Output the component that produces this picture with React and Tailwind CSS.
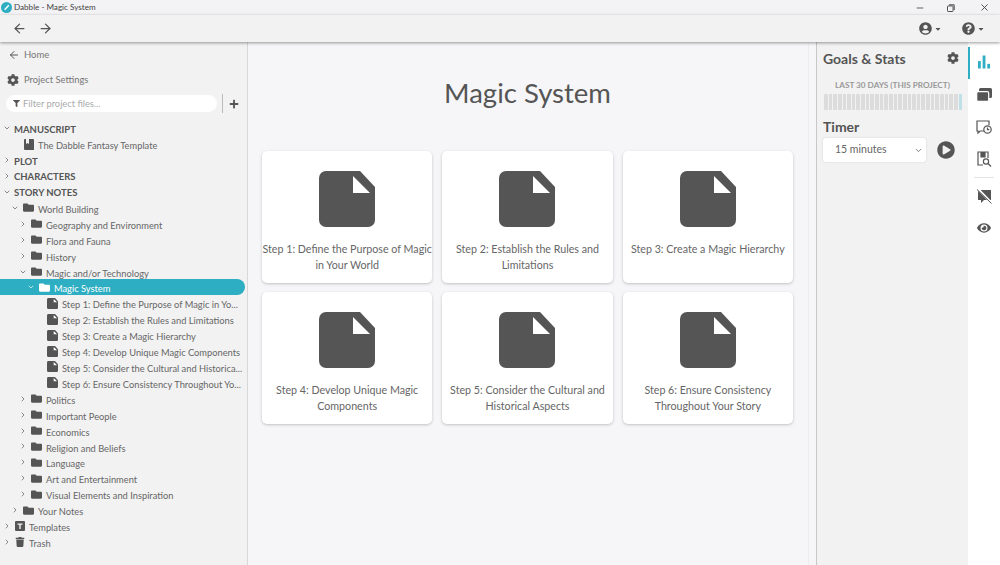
import React from "react";
import { ArrowLeft, ArrowRight, ChevronDown, ChevronRight, Minus, X } from "lucide-react";
import { FaCog, FaFilter, FaPlus, FaFolder, FaTrash, FaUserCircle, FaQuestionCircle, FaPlayCircle, FaEye, FaCaretDown } from "react-icons/fa";

const font = "font-['Lato','Open_Sans',sans-serif]";

const FileIcon = ({ className }) => (
  <svg viewBox="0 0 56 56" className={className}>
    <path d="M7 0H41L56 16V49a7 7 0 0 1-7 7H7a7 7 0 0 1-7-7V7a7 7 0 0 1 7-7Z" fill="#555" />
    <path d="M34 5L51 22H34Z" fill="#fff" />
  </svg>
);

const BookIcon = () => (
  <svg viewBox="0 0 10 11" className="w-[10px] h-[11px] shrink-0 ml-[1px]">
    <path d="M0 1a1 1 0 0 1 1-1h1v5l1.5-1L5 5V0h4a1 1 0 0 1 1 1v10H1a1 1 0 0 1-1-1Z" fill="#555" />
  </svg>
);

const TemplateIcon = () => (
  <svg viewBox="0 0 10 10" className="w-[10px] h-[10px] shrink-0">
    <rect width="10" height="10" rx="1" fill="#555" />
    <path d="M2.5 2.5h5v1.3H5.7V8H4.3V3.8H2.5Z" fill="#f2f2f2" />
  </svg>
);

const indent = ["pl-[3px]", "pl-[11px]", "pl-[19px]", "pl-[27px]", "pl-[35px]"];

const Row = ({ depth = 0, open, leaf, icon, active, bold, label }) => (
  <div
    className={`flex items-center h-[15.92px] ${indent[depth]} ${
      active ? "bg-[#2eaec2] text-white rounded-r-full w-[245px]" : "text-[#666]"
    }`}
  >
    <span className="w-2 shrink-0 flex items-center justify-center mr-[4px]">
      {!leaf &&
        (open ? (
          <ChevronDown size={10} strokeWidth={2} className={active ? "text-white" : "text-[#555]"} />
        ) : (
          <ChevronRight size={10} strokeWidth={2} className="text-[#555]" />
        ))}
    </span>
    {icon}
    <span
      className={`whitespace-nowrap ${
        bold ? "font-bold text-[9.5px] text-[#555] -ml-[1px] pt-[3px]" : "text-[9.3px] ml-[4px] pt-[4px]"
      }`}
    >
      {label}
    </span>
  </div>
);

const Folder = ({ white }) => (
  <FaFolder className={`w-[11px] h-[11px] shrink-0 ${white ? "text-white" : "text-[#555]"}`} />
);
const Page = () => <FileIcon className="w-[11px] h-[11px] shrink-0" />;

const closedFolders = ["Politics", "Important People", "Economics", "Religion and Beliefs", "Language", "Art and Entertainment", "Visual Elements and Inspiration"];
const steps = [
  "Step 1: Define the Purpose of Magic in Yo...",
  "Step 2: Establish the Rules and Limitations",
  "Step 3: Create a Magic Hierarchy",
  "Step 4: Develop Unique Magic Components",
  "Step 5: Consider the Cultural and Historica...",
  "Step 6: Ensure Consistency Throughout Yo...",
];
const cards = [
  "Step 1: Define the Purpose of Magic in Your World",
  "Step 2: Establish the Rules and Limitations",
  "Step 3: Create a Magic Hierarchy",
  "Step 4: Develop Unique Magic Components",
  "Step 5: Consider the Cultural and Historical Aspects",
  "Step 6: Ensure Consistency Throughout Your Story",
];

const Sidebar = () => (
  <aside className="w-[248px] shrink-0 bg-[#f2f2f2] border-r border-[#d8d8d8] flex flex-col">
    <div className="flex items-center h-[25px] pl-[8px] text-[#777] text-[9.5px]">
      <ArrowLeft size={12} className="text-[#555] mr-[4px]" />
      <span className="pt-[1px]">Home</span>
    </div>
    <div className="flex items-center h-[25px] pl-[7px] text-[#777] text-[9.4px]">
      <FaCog className="w-[12px] h-[12px] text-[#555] mr-[5px]" />
      <span className="pt-[1px]">Project Settings</span>
    </div>
    <div className="flex items-center h-[23px] pl-[6px]">
      <div className="flex items-center w-[211px] h-[17px] bg-white rounded-full pl-[7px] text-[9.3px] text-[#aaa]">
        <FaFilter className="w-[7px] h-[7px] text-[#555] mr-[3px]" />
        Filter project files...
      </div>
      <div className="w-px h-[19px] bg-[#bbb] ml-[5px]" />
      <FaPlus className="w-[10px] h-[10px] text-[#555] ml-[6px]" />
    </div>
    <div className="mt-[5.4px]">
      <Row open bold label="MANUSCRIPT" />
      <Row depth={1} leaf icon={<BookIcon />} label="The Dabble Fantasy Template" />
      <Row bold label="PLOT" />
      <Row bold label="CHARACTERS" />
      <Row open bold label="STORY NOTES" />
      <Row depth={1} open icon={<Folder />} label="World Building" />
      <Row depth={2} icon={<Folder />} label="Geography and Environment" />
      <Row depth={2} icon={<Folder />} label="Flora and Fauna" />
      <Row depth={2} icon={<Folder />} label="History" />
      <Row depth={2} open icon={<Folder />} label="Magic and/or Technology" />
      <Row depth={3} open active icon={<Folder white />} label="Magic System" />
      {steps.map((s) => (
        <Row key={s} depth={4} leaf icon={<Page />} label={s} />
      ))}
      {closedFolders.map((s) => (
        <Row key={s} depth={2} icon={<Folder />} label={s} />
      ))}
      <Row depth={1} icon={<Folder />} label="Your Notes" />
      <Row icon={<TemplateIcon />} label="Templates" />
      <Row icon={<FaTrash className="w-[10px] h-[10px] text-[#555] shrink-0" />} label="Trash" />
    </div>
  </aside>
);

const StatsIcon = () => (
  <svg viewBox="0 0 14 14" className="w-[13px] h-[14px]">
    <rect x="0" y="6" width="3" height="8" fill="#2eaec2" />
    <rect x="5" y="0" width="3" height="14" fill="#2eaec2" />
    <rect x="10" y="9" width="3" height="5" fill="#2eaec2" />
  </svg>
);

const CardsIcon = () => (
  <svg viewBox="0 0 16 14" className="w-[16px] h-[14px]">
    <rect x="3" y="0" width="13" height="10" rx="1.5" fill="#555" />
    <rect x="0.7" y="3.7" width="12" height="9.6" rx="1.5" fill="#555" stroke="#fff" strokeWidth="1.2" />
  </svg>
);

const HistoryIcon = () => (
  <svg viewBox="0 0 16 15" className="w-[16px] h-[15px]" fill="none" stroke="#555" strokeWidth="1.2">
    <path d="M8 11H4l-2 2v-2H1V1h12v4" />
    <circle cx="11.5" cy="9.5" r="3.7" fill="#fff" />
    <path d="M11.5 7.5v2.2h1.8" />
  </svg>
);

const SearchDocIcon = () => (
  <svg viewBox="0 0 15 16" className="w-[15px] h-[16px]" fill="none" stroke="#555" strokeWidth="1.2">
    <path d="M6 14H1V1h10v6" />
    <path d="M4 1v5h4V1" fill="#555" />
    <circle cx="9" cy="10.5" r="2.6" />
    <path d="M11 12.5l3 3" />
  </svg>
);

const NoCommentIcon = () => (
  <svg viewBox="0 0 15 15" className="w-[15px] h-[15px]">
    <path d="M1 1h13v10H7l-3 3v-3H1Z" fill="#555" />
    <path d="M1 0l13.5 14" stroke="#fff" strokeWidth="2.4" />
    <path d="M0 0.5l14.5 14" stroke="#555" strokeWidth="1" />
  </svg>
);

const IconBar = () => (
  <div className="w-[32px] shrink-0 bg-white flex flex-col items-center relative">
    <div className="absolute left-0 top-[5px] w-[2px] h-[32px] bg-[#2eaec2]" />
    <div className="h-[34px] mt-[3px] flex items-center justify-center"><StatsIcon /></div>
    <div className="h-[32px] flex items-center justify-center"><CardsIcon /></div>
    <div className="h-[32px] flex items-center justify-center"><HistoryIcon /></div>
    <div className="h-[32px] flex items-center justify-center"><SearchDocIcon /></div>
    <div className="w-[20px] h-px bg-[#e4e4e4] my-[2px]" />
    <div className="h-[32px] flex items-center justify-center"><NoCommentIcon /></div>
    <div className="h-[32px] flex items-center justify-center"><FaEye className="w-[14px] h-[14px] text-[#555]" /></div>
  </div>
);

const Goals = () => (
  <div className="w-[152px] shrink-0 bg-[#f2f2f2] border-l border-[#c8c8c8] px-[6px]">
    <div className="flex items-center justify-between h-[32px] pr-[3px]">
      <span className="text-[14px] font-bold text-[#555]">Goals &amp; Stats</span>
      <FaCog className="w-[12px] h-[12px] text-[#555]" />
    </div>
    <div className="text-[8.2px] font-bold text-[#999] text-center mt-[5px] leading-[12px]">LAST 30 DAYS (THIS PROJECT)</div>
    <div className="flex gap-[1px] mt-[3px] h-[16px] ml-[1px]">
      {Array.from({ length: 30 }).map((_, i) => (
        <div key={i} className={`flex-1 ${i === 29 ? "bg-[#bfe0e6]" : "bg-[#dcdcdc]"}`} />
      ))}
    </div>
    <div className="text-[14px] font-bold text-[#555] mt-[7px] leading-[20px]">Timer</div>
    <div className="flex items-center mt-[1px]">
      <div className="flex items-center justify-between w-[103px] h-[24px] bg-white rounded-[3px] shadow-[0_0_2px_rgba(0,0,0,0.15)] pl-[12px] pr-[3px] text-[10.5px] text-[#666]">
        15 minutes
        <ChevronDown size={9} className="text-[#555]" />
      </div>
      <FaPlayCircle className="w-[18px] h-[18px] text-[#555] ml-[11px]" />
    </div>
  </div>
);

const Main = () => (
  <main className="flex-1 min-w-0 flex bg-[#f6f6f8]">
    <div className="w-[560px] shrink-0 pl-[14px] pr-[15px]">
      <h1 className="text-[27.5px] leading-[36px] text-center text-[#555] mt-[33px] mb-[40px]">Magic System</h1>
      <div className="grid grid-cols-3 gap-x-[10px] gap-y-[9px]">
        {cards.map((c) => (
          <div
            key={c}
            className="h-[132px] bg-white rounded-[5px] shadow-[0_1px_3px_rgba(0,0,0,0.22)] flex flex-col items-center pt-[20px]"
          >
            <FileIcon className="w-[56px] h-[56px] shrink-0" />
            <p className="text-[10.7px] leading-[16px] text-[#666] text-center mt-[14px]">{c}</p>
          </div>
        ))}
      </div>
    </div>
    <div className="w-[8px] border-l border-[#ececec] bg-[#f6f6f8]" />
  </main>
);

export default function App() {
  return (
    <div className={`${font} w-[1000px] h-[565px] overflow-hidden flex flex-col bg-white`}>
      <div className="h-[15px] shrink-0 bg-[#f3f3f5] flex items-center text-[8.1px] text-[#444]">
        <svg viewBox="0 0 12 12" className="w-[11px] h-[11px] ml-[1px] mr-[2px]">
          <circle cx="6" cy="6" r="6" fill="#2eaec2" />
          <path d="M4 8.5L8.5 3.5" stroke="#fff" strokeWidth="1.6" />
        </svg>
        Dabble - Magic System
        <div className="ml-auto flex items-center text-[#444]">
          <Minus size={10} className="mr-[22px]" />
          <svg viewBox="0 0 10 10" className="w-[8px] h-[8px] mr-[24px]" fill="none" stroke="#444" strokeWidth="1.2">
            <rect x="0.6" y="2.4" width="7" height="7" rx="1" />
            <path d="M2.5 1h6.5v6.5" />
          </svg>
          <X size={11} className="mr-[10px]" />
        </div>
      </div>
      <div className="h-[27px] shrink-0 bg-[#f2f2f2] shadow-[0_1px_3px_rgba(0,0,0,0.4)] z-10 flex items-center pl-[12px]">
        <ArrowLeft size={15} className="text-[#555] mr-[11px]" />
        <ArrowRight size={15} className="text-[#555]" />
        <div className="ml-auto flex items-center text-[#555]">
          <FaUserCircle className="w-[13px] h-[13px]" />
          <FaCaretDown className="w-[8px] h-[8px] ml-[2px] mr-[20px]" />
          <FaQuestionCircle className="w-[13px] h-[13px]" />
          <FaCaretDown className="w-[8px] h-[8px] ml-[2px] mr-[15px]" />
        </div>
      </div>
      <div className="flex-1 min-h-0 flex">
        <Sidebar />
        <Main />
        <Goals />
        <IconBar />
      </div>
    </div>
  );
}
